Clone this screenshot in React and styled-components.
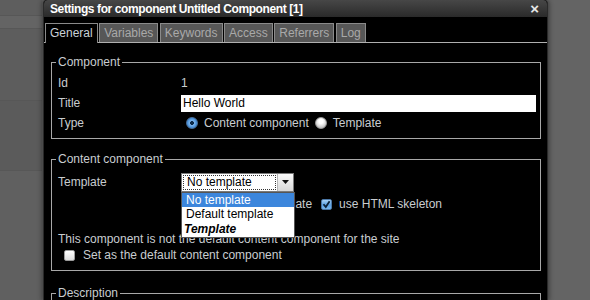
import styled, { createGlobalStyle } from "styled-components";

const GlobalStyle = createGlobalStyle`
  html, body {
    margin: 0;
    padding: 0;
    background: #646464;
    font-family: "Liberation Sans", Arial, sans-serif;
    overflow: hidden;
  }
`;

const Page = styled.div`
  position: relative;
  width: 590px;
  height: 300px;
  display: flex;
  flex-direction: column;
`;

const PageStrip = styled.div`
  height: ${(p) => p.h}px;
  width: 42px;
  background: ${(p) => p.bg};
  border-top: ${(p) => (p.line ? "1px solid #575757" : "none")};
  box-sizing: border-box;
`;

const Dialog = styled.div`
  position: absolute;
  left: 43px;
  top: 0;
  width: 503px;
  height: 300px;
  overflow: hidden;
  background: #000;
  border-left: 1px solid #2a2a2a;
  border-right: 1px solid #2a2a2a;
  border-radius: 4px 4px 0 0;
  box-shadow: 0 0 5px 1px rgba(0, 0, 0, 0.45);
  display: flex;
  flex-direction: column;
`;

const TitleBar = styled.div`
  height: 17px;
  flex: none;
  display: flex;
  align-items: center;
  justify-content: space-between;
  padding: 0 8px 0 6px;
  background: linear-gradient(#474747, #2a2a2a);
  border-radius: 4px 4px 0 0;
  color: #fff;
  font-size: 12px;
  font-weight: bold;
  letter-spacing: -0.4px;
`;

const Close = styled.span`
  font-size: 15px;
  line-height: 15px;
  color: #e8e8e8;
  letter-spacing: 0;
`;

const TabStrip = styled.div`
  display: flex;
  flex: none;
  gap: 1.5px;
  margin-top: 6px;
  padding-left: 1px;
  border-bottom: 1px solid #b0b0b0;
`;

const Tab = styled.div`
  height: 18px;
  line-height: 18px;
  padding: 0 4px;
  font-size: 12px;
  border: 1px solid #8a8a8a;
  border-bottom: none;
  color: ${(p) => (p.active ? "#c9d0d6" : "#a9a9a9")};
  background: ${(p) => (p.active ? "#000" : "#575757")};
  margin-bottom: ${(p) => (p.active ? "-1px" : "0")};
  padding-bottom: ${(p) => (p.active ? "1px" : "0")};
`;

const Body = styled.div`
  padding: 0 6px 0 7px;
  display: flex;
  flex-direction: column;
`;

const Fieldset = styled.fieldset`
  margin: ${(p) => p.top}px 0 0 0;
  padding: 0 4px ${(p) => p.bottom || 0}px 4px;
  border: 1px solid #a8a8a8;
  min-width: 0;
`;

const Legend = styled.legend`
  padding: 0 2px;
  font-size: 12px;
  line-height: 14px;
  color: #c9cdd0;
`;

const Row = styled.div`
  display: grid;
  grid-template-columns: 123px 1fr;
  align-items: center;
  height: ${(p) => p.h || 20}px;
  margin-top: ${(p) => p.mt || 0}px;
  margin-left: 2px;
  font-size: 12px;
  color: #c9cdd0;
`;

const Value = styled.div`
  display: flex;
  align-items: center;
  position: relative;
`;

const TextInput = styled.div`
  height: 17px;
  line-height: 17px;
  background: #fff;
  color: #000;
  font-size: 12px;
  padding-left: 2px;
  box-sizing: border-box;
  width: 100%;
  margin-right: -1px;
`;

const Radio = styled.span`
  width: 12px;
  height: 12px;
  border-radius: 50%;
  margin: 0 6px 0 ${(p) => p.ml}px;
  box-sizing: border-box;
  flex: none;
  background: ${(p) =>
    p.checked
      ? "radial-gradient(circle at 50% 50%, #0c2a4a 0 1.7px, #7fb6ec 2.2px, #3f8ad6 5px, #5aa0e6 6px)"
      : "radial-gradient(circle at 50% 35%, #ffffff 0 2px, #e4e4e4 4px, #c4c4c4 6px)"};
  border: 1px solid ${(p) => (p.checked ? "#4a6f99" : "#9a9a9a")};
`;

const Check = styled.span`
  width: 11px;
  height: 11px;
  border-radius: 2px;
  margin: 0 ${(p) => p.mr}px 0 ${(p) => p.ml}px;
  flex: none;
  box-sizing: border-box;
  display: flex;
  align-items: center;
  justify-content: center;
  background: ${(p) =>
    p.checked
      ? "linear-gradient(#a8d2f6, #5aa1e4 55%, #7ab8ef)"
      : "linear-gradient(#ffffff, #dcdcdc)"};
  border: 1px solid ${(p) => (p.checked ? "#4b77a6" : "#9b9b9b")};
`;

const Select = styled.div`
  position: relative;
  width: 113px;
  height: 19px;
  box-sizing: border-box;
  border: 1px solid #7a7a7a;
  background: #fff;
  display: flex;
  font-size: 12px;
  color: #000;
`;

const SelectText = styled.div`
  flex: 1;
  margin: 1px;
  border: 1px dotted #333;
  line-height: 13px;
  padding-left: 3px;
`;

const Arrow = styled.div`
  width: 15px;
  border-left: 1px solid #b5b5b5;
  background: linear-gradient(#fafafa, #d8d8d8);
  display: flex;
  align-items: center;
  justify-content: center;
`;

const List = styled.div`
  position: absolute;
  top: 18px;
  left: -1px;
  width: 112px;
  background: #fff;
  border: 1px solid #555;
  z-index: 2;
  padding-bottom: 1px;
`;

const Option = styled.div`
  height: 14.5px;
  line-height: 14.5px;
  font-size: 12px;
  padding-left: ${(p) => (p.em ? 2 : 4)}px;
  background: ${(p) => (p.selected ? "#3c86dc" : "#fff")};
  color: ${(p) => (p.selected ? "#fff" : "#000")};
  font-weight: ${(p) => (p.em ? "bold" : "normal")};
  font-style: ${(p) => (p.em ? "italic" : "normal")};
`;

const Line = styled.div`
  display: flex;
  align-items: center;
  height: ${(p) => p.h}px;
  margin-top: ${(p) => p.mt || 0}px;
  margin-left: 2px;
  font-size: 12px;
  color: #c9cdd0;
`;

const Tick = () => (
  <svg width="9" height="9" viewBox="0 0 9 9">
    <path d="M1.5 4.2 L3.8 7 L7.6 1.2" fill="none" stroke="#0d2238" strokeWidth="1.8" />
  </svg>
);

export default function App() {
  const tabs = ["General", "Variables", "Keywords", "Access", "Referrers", "Log"];
  return (
    <Page>
      <GlobalStyle />
      <PageStrip h={15} bg="#5e5e5e" />
      <PageStrip h={13} bg="#646464" line />
      <PageStrip h={72} bg="#5d5d5d" line />
      <PageStrip h={70} bg="#5b5b5b" line />
      <PageStrip h={130} bg="#606060" line />
      <Dialog>
        <TitleBar>
          <span>Settings for component Untitled Component [1]</span>
          <Close>×</Close>
        </TitleBar>
        <TabStrip>
          {tabs.map((t, i) => (
            <Tab key={t} active={i === 0}>
              {t}
            </Tab>
          ))}
        </TabStrip>
        <Body>
          <Fieldset top={12} bottom={5}>
            <Legend>Component</Legend>
            <Row mt={4}>
              <span>Id</span>
              <Value>1</Value>
            </Row>
            <Row>
              <span>Title</span>
              <Value>
                <TextInput>Hello World</TextInput>
              </Value>
            </Row>
            <Row>
              <span>Type</span>
              <Value>
                <Radio checked ml={5} />
                Content component
                <Radio ml={6} />
                Template
              </Value>
            </Row>
          </Fieldset>
          <Fieldset top={13} bottom={6}>
            <Legend>Content component</Legend>
            <Row h={22} mt={5}>
              <span>Template</span>
              <Value>
                <Select>
                  <SelectText>No template</SelectText>
                  <Arrow>
                    <svg width="7" height="4" viewBox="0 0 7 4">
                      <path d="M0 0 H7 L3.5 4 Z" fill="#111" />
                    </svg>
                  </Arrow>
                  <List>
                    <Option selected>No template</Option>
                    <Option>Default template</Option>
                    <Option em>Template</Option>
                  </List>
                </Select>
              </Value>
            </Row>
            <Row h={22}>
              <span />
              <Value>
                <Check ml={5} mr={7} />
                use default template
                <Check checked ml={9} mr={7}>
                  <Tick />
                </Check>
                use HTML skeleton
              </Value>
            </Row>
            <Line h={14} mt={17}>
              This component is not the default content component for the site
            </Line>
            <Line h={18}>
              <Check ml={6} mr={8} />
              Set as the default content component
            </Line>
          </Fieldset>
          <Fieldset top={15} bottom={20}>
            <Legend>Description</Legend>
          </Fieldset>
        </Body>
      </Dialog>
    </Page>
  );
}
